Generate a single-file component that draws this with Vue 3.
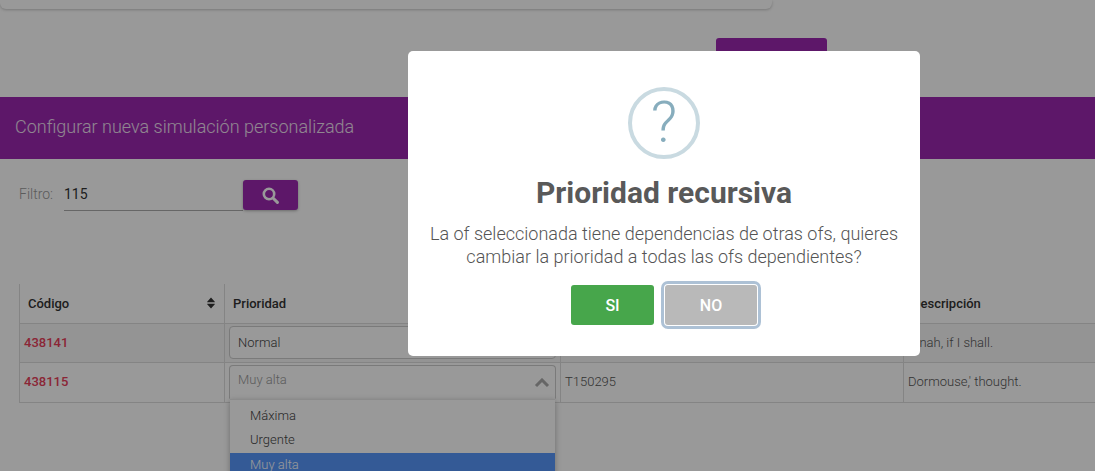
<script setup>
const options = ['Máxima', 'Urgente', 'Muy alta']
const highlighted = 'Muy alta'
</script>

<template>
  <div class="page">
    <div class="top-card"></div>
    <div class="top-actions"><button class="top-btn" type="button"></button></div>

    <header class="banner">Configurar nueva simulación personalizada</header>

    <div class="filter">
      <label class="filter-label">Filtro:</label>
      <div class="filter-input">115</div>
      <button class="search-btn" type="button" aria-label="Buscar">
        <svg width="17" height="17" viewBox="0 0 17 17">
          <circle cx="7" cy="7" r="5.2" fill="none" stroke="#fff" stroke-width="2.6" />
          <path d="M11 11l4.4 4.4" stroke="#fff" stroke-width="3" stroke-linecap="round" />
        </svg>
      </button>
    </div>

    <table class="grid">
      <colgroup>
        <col class="c1" /><col class="c2" /><col class="c3" /><col class="c4" />
      </colgroup>
      <thead>
        <tr>
          <th>
            <div class="th-inner">
              <span>Código</span>
              <svg width="8" height="12" viewBox="0 0 8 12">
                <path d="M4 0.5L7.8 4.8a.3.3 0 0 1-.2.5H.4a.3.3 0 0 1-.2-.5zM.4 6.7h7.2a.3.3 0 0 1 .2.5L4 11.5.2 7.2a.3.3 0 0 1 .2-.5z" fill="#333" />
              </svg>
            </div>
          </th>
          <th>Prioridad</th>
          <th></th>
          <th>Descripción</th>
        </tr>
      </thead>
      <tbody>
        <tr class="striped">
          <td class="code">438141</td>
          <td class="sel-cell"><div class="select">Normal</div></td>
          <td></td>
          <td>Dinah, if I shall.</td>
        </tr>
        <tr class="second">
          <td class="code">438115</td>
          <td class="sel-cell">
            <div class="select open">
              <span>Muy alta</span>
              <svg class="chevron" width="16" height="10" viewBox="0 0 16 10">
                <path d="M2 8l6-6 6 6" fill="none" stroke="#aaa" stroke-width="3" />
              </svg>
              <ul class="dropdown">
                <li v-for="o in options" :key="o" :class="{ active: o === highlighted }">{{ o }}</li>
              </ul>
            </div>
          </td>
          <td>T150295</td>
          <td>Dormouse,' thought.</td>
        </tr>
      </tbody>
    </table>

    <div class="overlay">
      <div class="modal">
        <div class="q-icon">?</div>
        <h2 class="title">Prioridad recursiva</h2>
        <p class="text">La of seleccionada tiene dependencias de otras ofs, quieres cambiar la prioridad a todas las ofs dependientes?</p>
        <div class="actions">
          <button class="btn yes" type="button">SI</button>
          <button class="btn no" type="button">NO</button>
        </div>
      </div>
    </div>
  </div>
</template>

<style>
html, body { margin: 0; overflow: hidden; }
</style>

<style scoped>
.page {
  position: relative;
  width: 1095px;
  height: 471px;
  overflow: hidden;
  background: #fff;
  font-family: Roboto, "Liberation Sans", sans-serif;
  color: #333;
}
.top-card {
  width: 772px;
  height: 9px;
  background: #fff;
  border-radius: 0 0 6px 6px;
  box-shadow: 0 1px 3px rgba(0, 0, 0, .22);
}
.top-actions {
  display: flex;
  padding: 29px 0 0 716px;
  height: 59px;
  box-sizing: content-box;
}
.top-btn {
  width: 111px;
  height: 40px;
  border: 0;
  border-radius: 3px;
  background: #9c27b0;
}
.banner {
  height: 62px;
  box-sizing: border-box;
  display: flex;
  align-items: center;
  padding: 0 0 3px 15px;
  background: #9c27b0;
  color: #f0e0f0;
  font-size: 18px;
  font-weight: 300;
}
.filter {
  display: flex;
  align-items: flex-start;
  padding: 21px 0 0 19px;
  height: 104px;
}
.filter-label {
  width: 45px;
  line-height: 28px;
  font-size: 14px;
  font-weight: 300;
  color: #999;
}
.filter-input {
  width: 179px;
  height: 31px;
  box-sizing: border-box;
  line-height: 28px;
  font-size: 14px;
  color: #333;
  border-bottom: 1px solid #aaa;
}
.search-btn {
  width: 55px;
  height: 30px;
  border: 0;
  padding: 0;
  border-radius: 3px;
  background: #9c27b0;
  display: flex;
  align-items: center;
  justify-content: center;
  box-shadow: 0 1px 3px rgba(0, 0, 0, .3);
}
.grid {
  margin-left: 19px;
  width: 1100px;
  table-layout: fixed;
  border-collapse: collapse;
  font-size: 13px;
  font-weight: 300;
}
.c1 { width: 205px; }
.c2 { width: 336px; }
.c3 { width: 343px; }
.grid th, .grid td {
  border: 1px solid #ddd;
  border-top: 0;
  box-sizing: border-box;
}
.grid th {
  height: 39px;
  padding: 0 9px 0 8px;
  text-align: left;
  font-weight: 500;
  font-size: 13px;
  color: #333;
}
.th-inner { display: flex; align-items: center; justify-content: space-between; }
.grid td { height: 39px; padding: 0 4px; color: #555; }
.grid .second td { height: 40px; padding-bottom: 2px; }
.striped td { background: #f7f7f7; }
.grid td.code { font-weight: 500; color: #e8405a; }
.grid td.sel-cell { position: relative; padding: 0; vertical-align: top; }
.select {
  position: relative;
  margin: 2px 4px 0;
  height: 33px;
  line-height: 31px;
  box-sizing: border-box;
  padding-left: 8px;
  background: #fff;
  border: 1px solid #ccc;
  border-radius: 4px;
  color: #444;
}
.select.open {
  height: 34px;
  line-height: 27px;
  color: #999;
  border-radius: 4px 4px 0 0;
  border-bottom-color: transparent;
}
.chevron { position: absolute; right: 5px; top: 12px; }
.dropdown {
  position: absolute;
  left: 0;
  right: 0;
  top: 33px;
  margin: 0;
  padding: 4px 0 0;
  list-style: none;
  background: #fff;
  border-top: 1px solid #e8e8e8;
  box-shadow: 0 2px 6px rgba(0, 0, 0, .3);
  z-index: 2;
}
.dropdown li {
  height: 24px;
  line-height: 24px;
  padding-left: 20px;
  color: #444;
}
.dropdown li.active {
  background: #5897fb;
  color: #fff;
  height: 40px;
  margin-top: 1px;
}
.overlay {
  position: absolute;
  inset: 0;
  z-index: 5;
  background: rgba(0, 0, 0, .4);
  display: flex;
  align-items: flex-start;
  padding: 51px 0 0 408px;
  box-sizing: border-box;
}
.modal {
  width: 512px;
  height: 305px;
  box-sizing: border-box;
  padding-top: 36px;
  background: #fff;
  border-radius: 5px;
  text-align: center;
}
.q-icon {
  width: 72px;
  height: 72px;
  margin: 0 auto;
  box-sizing: border-box;
  border: 4px solid #c9dae1;
  border-radius: 50%;
  color: #87adbd;
  font-size: 58px;
  font-weight: 300;
  line-height: 62px;
}
.title {
  margin: 15px 0 0;
  font-size: 30px;
  line-height: 37px;
  font-weight: 700;
  color: #595959;
}
.text {
  margin: 11px auto 0;
  width: 480px;
  font-size: 18px;
  line-height: 23px;
  font-weight: 300;
  color: #545454;
}
.actions {
  display: flex;
  justify-content: center;
  gap: 11px;
  margin-top: 17px;
}
.btn {
  height: 40px;
  border: 0;
  border-radius: 3px;
  color: #fff;
  font-family: inherit;
  font-size: 16px;
  font-weight: 500;
}
.yes { width: 83px; background: #47a64b; }
.no {
  width: 92px;
  background: #b9b9b9;
  box-shadow: 0 0 0 1px #fff, 0 0 0 4px rgba(50, 100, 150, .4);
}
</style>
